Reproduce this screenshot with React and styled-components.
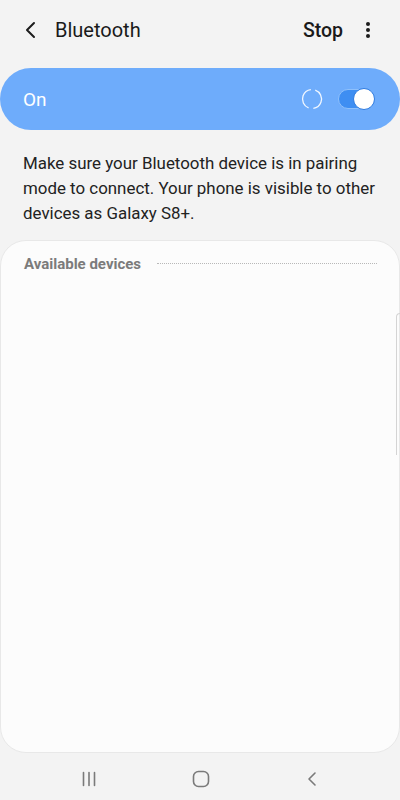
import React from "react";
import styled, { createGlobalStyle } from "styled-components";

const GlobalStyle = createGlobalStyle`
  html, body {
    margin: 0;
    padding: 0;
    background: #f3f3f3;
  }
  body {
    font-family: Roboto, "Liberation Sans", sans-serif;
    -webkit-font-smoothing: antialiased;
  }
`;

const Screen = styled.div`
  width: 400px;
  height: 800px;
  display: flex;
  flex-direction: column;
  background: #f3f3f3;
  overflow: hidden;
  position: relative;
`;

const Header = styled.header`
  height: 60px;
  display: flex;
  align-items: center;
  padding: 0 29px 0 22px;
  box-sizing: border-box;
`;

const IconButton = styled.span`
  display: flex;
  align-items: center;
  justify-content: center;
  color: #1c1c1c;
`;

const Title = styled.h1`
  margin: 0 0 0 15px;
  flex: 1;
  font-size: 20px;
  font-weight: 400;
  color: #1a1a1a;
`;

const Action = styled.span`
  font-size: 19.5px;
  font-weight: 500;
  color: #1a1a1a;
  margin-right: 22px;
`;

const MasterBar = styled.div`
  margin-top: 8px;
  height: 62px;
  border-radius: 31px;
  background: #6eacfb;
  display: flex;
  align-items: center;
  padding: 0 27px 0 23px;
  box-sizing: border-box;
`;

const MasterLabel = styled.span`
  flex: 1;
  color: #fff;
  font-size: 19px;
`;

const Spinner = styled.svg`
  margin-right: 15px;
`;

const Track = styled.div`
  width: 35px;
  height: 20px;
  border-radius: 10px;
  background: #3e8ef2;
  border: 1px solid #8ec0fb;
  box-sizing: border-box;
  position: relative;
`;

const Knob = styled.div`
  position: absolute;
  top: -2px;
  right: -3px;
  width: 22px;
  height: 22px;
  border-radius: 50%;
  background: #fff;
  border: 1.5px solid #2e7be0;
  box-sizing: border-box;
`;

const Description = styled.p`
  margin: 21px 0 0;
  padding: 0 18px 0 23px;
  font-size: 16.9px;
  line-height: 25px;
  color: #222;
`;

const Card = styled.section`
  margin-top: 14px;
  flex: 1;
  background: #fcfcfc;
  border-radius: 26px;
  border: 1px solid #e8e8e8;
  box-sizing: border-box;
  padding: 14px 22px 0 23px;
`;

const SectionHead = styled.div`
  display: flex;
  align-items: center;
  gap: 16px;
`;

const SectionLabel = styled.span`
  font-size: 15px;
  font-weight: 700;
  color: #7b7b7b;
`;

const Dots = styled.span`
  flex: 1;
  border-top: 1.5px dotted #b8b8b8;
  margin-top: -2px;
`;

const ScrollEdge = styled.div`
  position: absolute;
  right: 0;
  top: 313px;
  width: 4px;
  height: 142px;
  border-left: 1px solid #d4d4d4;
  border-top: 1px solid #d4d4d4;
  border-top-left-radius: 4px;
  box-sizing: border-box;
`;

const NavBar = styled.nav`
  height: 47px;
  display: grid;
  grid-template-columns: repeat(3, 1fr);
  align-items: center;
  justify-items: center;
  padding: 4px 31px 0 33px;
  box-sizing: border-box;
`;

const Chevron = ({ size = 18, color = "#1c1c1c", width = 2 }) => (
  <svg width={size} height={size} viewBox="0 0 18 18">
    <path
      d="M12 2 L5 9 L12 16"
      fill="none"
      stroke={color}
      strokeWidth={width}
      strokeLinecap="round"
      strokeLinejoin="round"
    />
  </svg>
);

export default function App() {
  return (
    <>
      <GlobalStyle />
      <Screen>
        <Header>
          <IconButton>
            <Chevron />
          </IconButton>
          <Title>Bluetooth</Title>
          <Action>Stop</Action>
          <IconButton>
            <svg width="6" height="18" viewBox="0 0 6 18">
              <circle cx="3" cy="3" r="2" fill="#1c1c1c" />
              <circle cx="3" cy="9" r="2" fill="#1c1c1c" />
              <circle cx="3" cy="15" r="2" fill="#1c1c1c" />
            </svg>
          </IconButton>
        </Header>

        <MasterBar>
          <MasterLabel>On</MasterLabel>
          <Spinner width="22" height="22" viewBox="0 0 22 22">
            <circle
              cx="11"
              cy="11"
              r="9.5"
              fill="none"
              stroke="#fff"
              strokeOpacity="0.9"
              strokeWidth="1.3"
              strokeDasharray="25 4.85"
              transform="rotate(-70 11 11)"
            />
          </Spinner>
          <Track>
            <Knob />
          </Track>
        </MasterBar>

        <Description>
          Make sure your Bluetooth device is in pairing mode to connect. Your
          phone is visible to other devices as Galaxy S8+.
        </Description>

        <Card>
          <SectionHead>
            <SectionLabel>Available devices</SectionLabel>
            <Dots />
          </SectionHead>
        </Card>
        <ScrollEdge />

        <NavBar>
          <svg width="16" height="16" viewBox="0 0 16 16">
            <path
              d="M2.5 1.5v13M8 1.5v13M13.5 1.5v13"
              stroke="#7a7a7a"
              strokeWidth="1.6"
              strokeLinecap="round"
            />
          </svg>
          <svg width="18" height="18" viewBox="0 0 18 18">
            <rect
              x="1.5"
              y="1.5"
              width="15"
              height="15"
              rx="5"
              fill="none"
              stroke="#7a7a7a"
              strokeWidth="1.6"
            />
          </svg>
          <svg width="16" height="16" viewBox="0 0 16 16">
            <path
              d="M10 2 L4 8 L10 14"
              fill="none"
              stroke="#7a7a7a"
              strokeWidth="1.6"
              strokeLinecap="round"
              strokeLinejoin="round"
            />
          </svg>
        </NavBar>
      </Screen>
    </>
  );
}
